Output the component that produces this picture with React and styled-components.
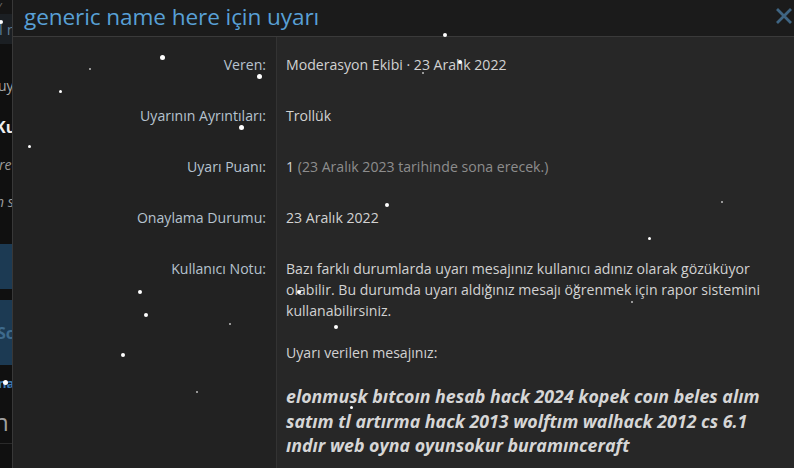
import styled, { createGlobalStyle } from "styled-components";

const GlobalStyle = createGlobalStyle`
html, body {
  margin: 0;
  padding: 0;
  background: #101010;
}
* { box-sizing: border-box; }
`;

const Screen = styled.div`
  position: relative;
  display: flex;
  width: 794px;
  height: 468px;
  overflow: hidden;
  font-family: "Open Sans", "Noto Sans", sans-serif;
`;

const BackPage = styled.div`
  width: 12px;
  flex: none;
  display: flex;
  flex-direction: column;
  overflow: hidden;
  background: #101010;
`;

const BackBlock = styled.div`
  height: ${(p) => p.$h}px;
  flex: none;
  background: ${(p) => p.$bg || "transparent"};
  border-bottom: ${(p) => (p.$line ? "1px solid #2a2a2a" : "none")};
  display: flex;
  align-items: center;
  white-space: nowrap;
  overflow: hidden;
`;

const BackText = styled.span`
  margin-left: ${(p) => p.$shift || 0}px;
  font-size: ${(p) => p.$size || 14}px;
  font-weight: ${(p) => (p.$bold ? 700 : 400)};
  font-style: ${(p) => (p.$italic ? "italic" : "normal")};
  color: ${(p) => p.$color || "#9a9a9a"};
`;

const Modal = styled.div`
  flex: 1;
  display: flex;
  flex-direction: column;
  background: #262626;
  border-left: 1px solid #383838;
`;

const Header = styled.div`
  height: 37px;
  flex: none;
  display: flex;
  align-items: center;
  justify-content: space-between;
  padding: 0 1px 4px 11px;
  background: #1b1b1b;
  border-bottom: 1px solid #3a3a3a;
`;

const Title = styled.h1`
  margin: 0;
  font-size: 22.6px;
  font-weight: 400;
  color: #58a0d6;
  letter-spacing: -0.1px;
`;

const Close = styled.button`
  width: 18px;
  height: 18px;
  padding: 0;
  border: none;
  background: none;
  display: flex;
  align-items: center;
  justify-content: center;
  cursor: pointer;
`;

const Body = styled.div`
  flex: 1;
  display: grid;
  grid-template-columns: 263px 1fr;
  grid-auto-rows: min-content;
  align-content: start;
  background: linear-gradient(to right, #222222 263px, #333 263px, #333 264px, #272727 264px);
  padding-top: 2px;
`;

const Label = styled.div`
  padding: 15px 10px 15px 0;
  text-align: right;
  font-size: 14.1px;
  line-height: 21px;
  color: #b6c3cf;
`;

const Value = styled.div`
  padding: 15px 18px 15px 10px;
  font-size: 14.1px;
  line-height: 21px;
  color: #d2d2d2;
`;

const Muted = styled.span`
  color: #8d8d8d;
`;

const Para = styled.p`
  margin: 0 0 21px;
`;

const Quote = styled.div`
  font-size: 17.8px;
  line-height: 24.5px;
  font-weight: 700;
  font-style: italic;
  color: #d6d6d6;
`;

const Flake = styled.span`
  position: absolute;
  left: ${(p) => p.$x - p.$s / 2}px;
  top: ${(p) => p.$y - p.$s / 2}px;
  width: ${(p) => p.$s}px;
  height: ${(p) => p.$s}px;
  border-radius: 50%;
  background: #fff;
  opacity: ${(p) => (p.$s < 3 ? 0.7 : 1)};
  pointer-events: none;
`;

const flakes = [
  [1, 22, 4], [445, 35, 4], [162, 57, 5], [90, 69, 2], [259, 76, 5],
  [460, 62, 4], [423, 73, 2], [60, 91, 3], [241, 127, 5], [29, 146, 3],
  [387, 205, 4], [722, 202, 2], [649, 238, 3], [140, 292, 4], [146, 315, 4],
  [230, 324, 2], [299, 292, 4], [336, 327, 4], [632, 302, 2], [123, 355, 4],
  [197, 392, 2], [5, 382, 5], [351, 407, 3],
];

const rows = [
  { label: "Veren:", value: "Moderasyon Ekibi · 23 Aralık 2022" },
  { label: "Uyarının Ayrıntıları:", value: "Trollük" },
  {
    label: "Uyarı Puanı:",
    value: (
      <>
        1 <Muted>(23 Aralık 2023 tarihinde sona erecek.)</Muted>
      </>
    ),
  },
  { label: "Onaylama Durumu:", value: "23 Aralık 2022" },
];

export default function App() {
  return (
    <Screen>
      <GlobalStyle />
      <BackPage>
        <BackBlock $h={14} $bg="#151515">
          <BackText $shift={-2} $color="#6a6a6a">⁄</BackText>
        </BackBlock>
        <BackBlock $h={30} $bg="#1b1f23">
          <BackText $shift={-1} $color="#5d7b93" $size={15}>l n</BackText>
        </BackBlock>
        <BackBlock $h={22} />
        <BackBlock $h={38}>
          <BackText $shift={-2} $color="#a8a8a8">uy</BackText>
        </BackBlock>
        <BackBlock $h={46}>
          <BackText $shift={-5} $color="#eeeeee" $bold $size={16}>Ku</BackText>
        </BackBlock>
        <BackBlock $h={28}>
          <BackText $shift={-1} $color="#9a9a9a" $italic>rec</BackText>
        </BackBlock>
        <BackBlock $h={46}>
          <BackText $shift={-4} $color="#9a9a9a" $italic>n s</BackText>
        </BackBlock>
        <BackBlock $h={20} />
        <BackBlock $h={45} $bg="#1c3a53" />
        <BackBlock $h={11} />
        <BackBlock $h={65} $bg="#1c3a53">
          <BackText $shift={-3} $color="#3e6a8c" $bold $size={16}>Sc</BackText>
        </BackBlock>
        <BackBlock $h={35}>
          <BackText $shift={-2} $color="#3c7ab0" $bold $size={13}>na</BackText>
        </BackBlock>
        <BackBlock $h={44} $line>
          <BackText $shift={-6} $color="#a0a0a0" $size={24}>n</BackText>
        </BackBlock>
      </BackPage>

      <Modal>
        <Header>
          <Title>generic name here için uyarı</Title>
          <Close aria-label="Kapat">
            <svg width="16" height="16" viewBox="0 0 16 16">
              <path d="M2 2 L14 14 M14 2 L2 14" stroke="#3f6583" strokeWidth="2.8" strokeLinecap="square" />
            </svg>
          </Close>
        </Header>
        <Body>
          {rows.map((r) => (
            <>
              <Label key={r.label + "l"}>{r.label}</Label>
              <Value key={r.label + "v"}>{r.value}</Value>
            </>
          ))}
          <Label>Kullanıcı Notu:</Label>
          <Value>
            <Para>
              Bazı farklı durumlarda uyarı mesajınız kullanıcı adınız olarak gözüküyor
              olabilir. Bu durumda uyarı aldığınız mesajı öğrenmek için rapor sistemini
              kullanabilirsiniz.
            </Para>
            <Para>Uyarı verilen mesajınız:</Para>
            <Quote>
              elonmusk bıtcoın hesab hack 2024 kopek coın beles alım satım tl artırma
              hack 2013 wolftım walhack 2012 cs 6.1 ındır web oyna oyunsokur
              buramınceraft
            </Quote>
          </Value>
        </Body>
      </Modal>

      {flakes.map(([x, y, s], i) => (
        <Flake key={i} $x={x} $y={y} $s={s} />
      ))}
    </Screen>
  );
}
